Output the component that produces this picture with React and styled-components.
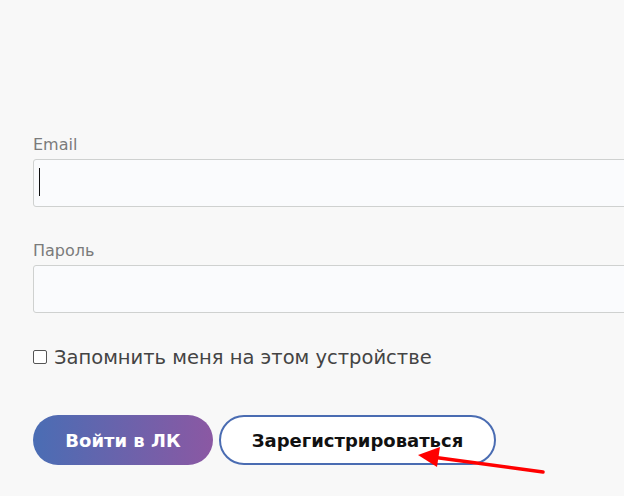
import React from "react";
import styled, { createGlobalStyle } from "styled-components";

const Global = createGlobalStyle`
  html, body { margin: 0; padding: 0; background: #f8f8f8; }
  body { font-family: "DejaVu Sans", "Open Sans", sans-serif; overflow: hidden; }
`;

const Page = styled.div`
  position: relative;
  width: 624px;
  height: 496px;
  overflow: hidden;
  background: #f8f8f8;
  box-sizing: border-box;
  padding: 135px 0 0 33px;
`;

const Form = styled.form`
  display: flex;
  flex-direction: column;
  width: 640px;
`;

const Field = styled.div`
  display: flex;
  flex-direction: column;
  gap: 4px;
  margin-bottom: ${(p) => p.$mb || 0}px;
`;

const Label = styled.label`
  font-size: 16px;
  line-height: 20px;
  color: #7b7b7b;
`;

const Input = styled.input`
  box-sizing: border-box;
  width: 100%;
  height: 48px;
  border: 1px solid #cfd1d0;
  border-radius: 3px;
  background: #fafbfd;
  padding: 0 5px;
  font-size: 16px;
  outline: none;
`;

const Caret = styled.span`
  position: absolute;
  left: 39px;
  top: 168px;
  width: 1px;
  height: 28px;
  background: #111;
`;

const Remember = styled.label`
  display: flex;
  align-items: center;
  gap: 7px;
  font-size: 19.5px;
  color: #444;
  margin-top: 32px;
  height: 24px;
`;

const Box = styled.span`
  width: 12px;
  height: 12px;
  border: 1px solid #555;
  border-radius: 2px;
  background: #fff;
  flex: none;
`;

const Buttons = styled.div`
  display: flex;
  gap: 6px;
  margin-top: 46px;
`;

const Button = styled.button`
  box-sizing: border-box;
  height: 50px;
  border-radius: 25px;
  font-family: "DejaVu Sans", sans-serif;
  font-weight: bold;
  font-size: 18px;
  padding: 0;
  cursor: pointer;
  width: ${(p) => p.$w}px;
  color: ${(p) => (p.$primary ? "#fff" : "#111")};
  border: ${(p) => (p.$primary ? "none" : "2px solid #4a6cb2")};
  background: ${(p) =>
    p.$primary ? "linear-gradient(90deg, #4a6db4 0%, #8b58a3 100%)" : "#fff"};
`;

const Arrow = styled.svg`
  position: absolute;
  left: 0;
  top: 0;
  pointer-events: none;
`;

export default function App() {
  return (
    <>
      <Global />
      <Page>
        <Form onSubmit={(e) => e.preventDefault()}>
          <Field $mb={34}>
            <Label>Email</Label>
            <Input type="email" />
          </Field>
          <Field>
            <Label>Пароль</Label>
            <Input type="password" />
          </Field>
          <Remember>
            <Box />
            Запомнить меня на этом устройстве
          </Remember>
          <Buttons>
            <Button $primary $w={180}>Войти в ЛК</Button>
            <Button $w={277}>Зарегистрироваться</Button>
          </Buttons>
        </Form>
        <Caret />
        <Arrow width="624" height="496" viewBox="0 0 624 496">
          <line x1="543" y1="472" x2="432" y2="457" stroke="#f00" strokeWidth="3.5" strokeLinecap="round" />
          <polygon points="418,455 440,447 437,467" fill="#f00" />
        </Arrow>
      </Page>
    </>
  );
}
